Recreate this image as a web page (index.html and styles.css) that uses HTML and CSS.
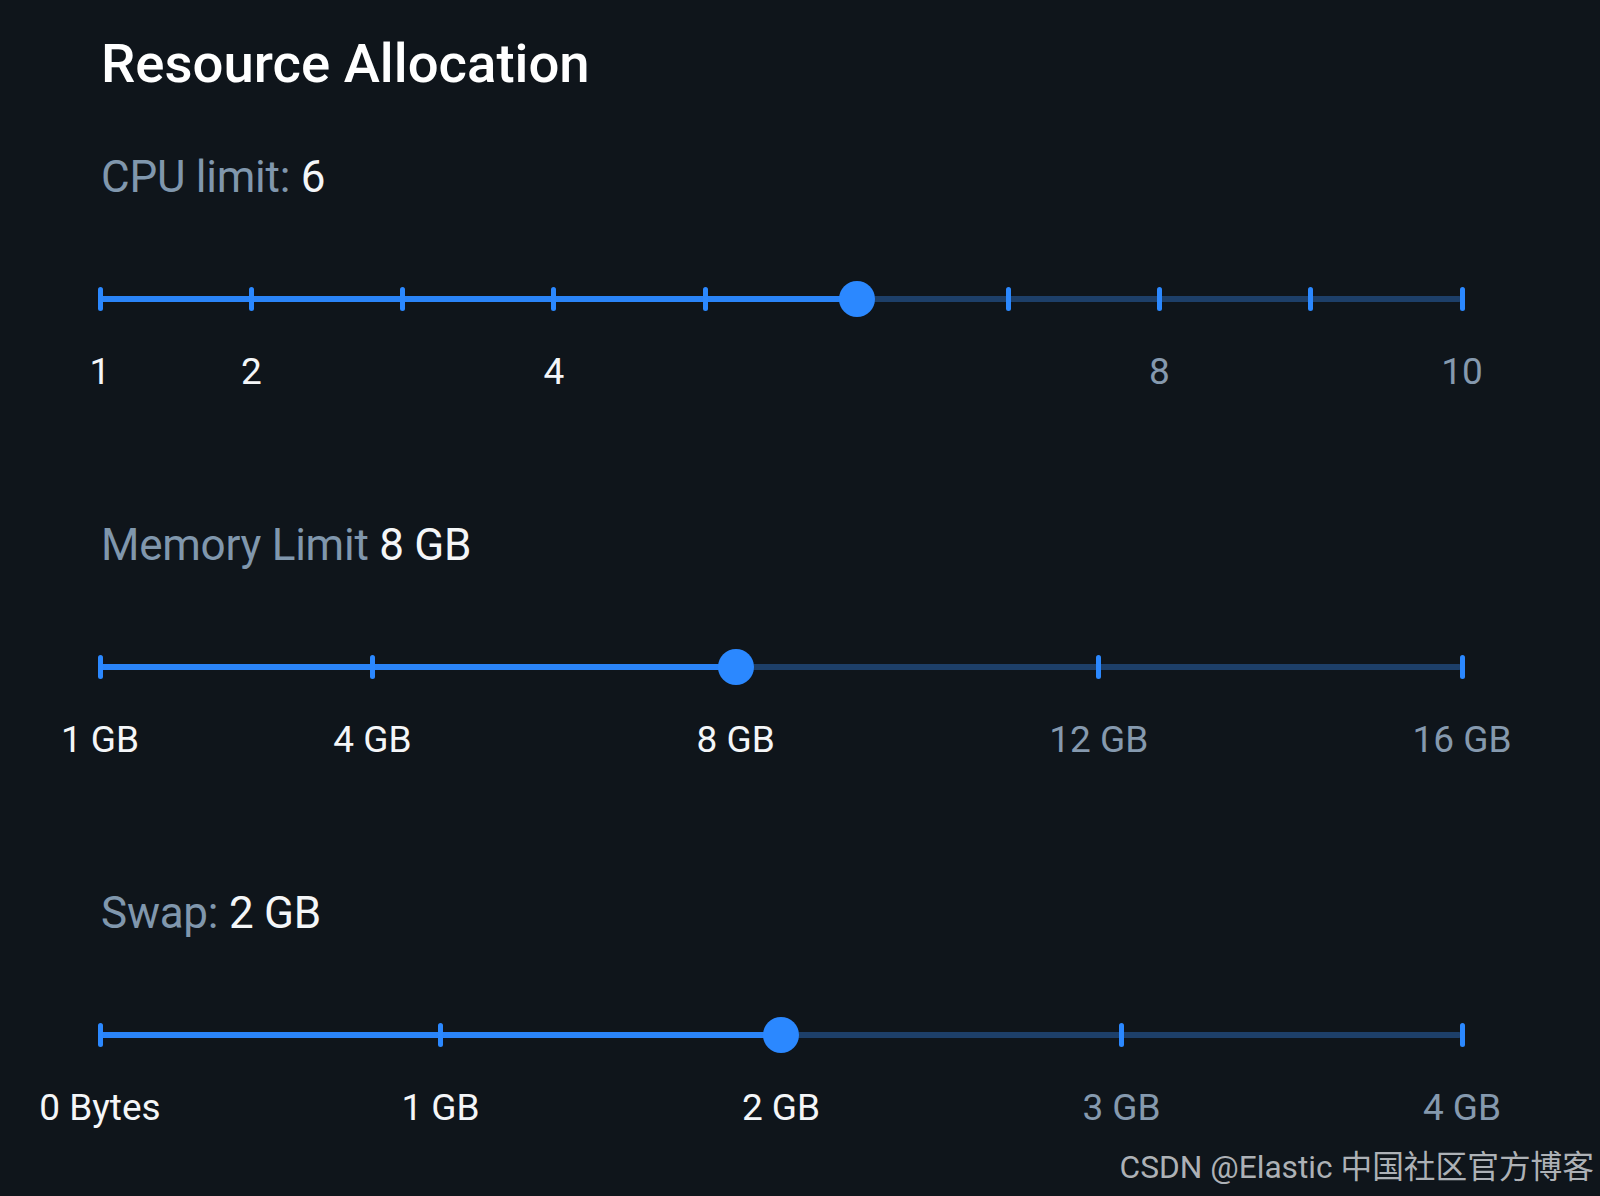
FILE: index.html
```html
<!DOCTYPE html>
<html lang="en">
<head>
<meta charset="utf-8">
<title>Resource Allocation</title>
<link rel="stylesheet" href="styles.css">
</head>
<body>
<main class="panel">
  <h1 class="title">Resource Allocation</h1>

  <section class="setting">
    <div class="setting-label">CPU limit: <span class="value">6</span></div>
    <div class="slider">
      <div class="rail"><div class="fill" style="width:55.556%"></div></div>
      <span class="tick" style="left:0%"></span>
      <span class="tick" style="left:11.111%"></span>
      <span class="tick" style="left:22.222%"></span>
      <span class="tick" style="left:33.333%"></span>
      <span class="tick" style="left:44.444%"></span>
      <span class="tick" style="left:66.667%"></span>
      <span class="tick" style="left:77.778%"></span>
      <span class="tick" style="left:88.889%"></span>
      <span class="tick" style="left:100%"></span>
      <span class="thumb" style="left:55.556%"></span>
    </div>
    <div class="marks">
      <span class="mark on" style="left:0%">1</span>
      <span class="mark on" style="left:11.111%">2</span>
      <span class="mark on" style="left:33.333%">4</span>
      <span class="mark" style="left:77.778%">8</span>
      <span class="mark" style="left:100%">10</span>
    </div>
  </section>

  <section class="setting">
    <div class="setting-label">Memory Limit <span class="value">8 GB</span></div>
    <div class="slider">
      <div class="rail"><div class="fill" style="width:46.667%"></div></div>
      <span class="tick" style="left:0%"></span>
      <span class="tick" style="left:20%"></span>
      <span class="tick" style="left:73.333%"></span>
      <span class="tick" style="left:100%"></span>
      <span class="thumb" style="left:46.667%"></span>
    </div>
    <div class="marks">
      <span class="mark on" style="left:0%">1 GB</span>
      <span class="mark on" style="left:20%">4 GB</span>
      <span class="mark on" style="left:46.667%">8 GB</span>
      <span class="mark" style="left:73.333%">12 GB</span>
      <span class="mark" style="left:100%">16 GB</span>
    </div>
  </section>

  <section class="setting">
    <div class="setting-label">Swap: <span class="value">2 GB</span></div>
    <div class="slider">
      <div class="rail"><div class="fill" style="width:50%"></div></div>
      <span class="tick" style="left:0%"></span>
      <span class="tick" style="left:25%"></span>
      <span class="tick" style="left:75%"></span>
      <span class="tick" style="left:100%"></span>
      <span class="thumb" style="left:50%"></span>
    </div>
    <div class="marks">
      <span class="mark on" style="left:0%">0 Bytes</span>
      <span class="mark on" style="left:25%">1 GB</span>
      <span class="mark on" style="left:50%">2 GB</span>
      <span class="mark" style="left:75%">3 GB</span>
      <span class="mark" style="left:100%">4 GB</span>
    </div>
  </section>
</main>
<div class="watermark">CSDN @Elastic 中国社区官方博客</div>
</body>
</html>
```

FILE: styles.css
```css
html, body {
  margin: 0;
  padding: 0;
}

body {
  width: 1600px;
  height: 1196px;
  background: #0f151b;
  font-family: Roboto, "Noto Sans", "Liberation Sans", sans-serif;
  color: #f4f6f8;
  position: relative;
  overflow: hidden;
}

.panel {
  padding: 31px 0 0 100px;
  width: 1362px;
}

.title {
  margin: 0;
  font-size: 54.5px;
  line-height: 64px;
  font-weight: 500;
  color: #ffffff;
  padding-left: 1px;
}

.setting {
  margin-top: 56px;
}

.setting + .setting {
  margin-top: 125px;
}

.setting-label {
  font-size: 44px;
  line-height: 52px;
  letter-spacing: -0.25px;
  color: #8097ad;
  padding-left: 1px;
}

.value {
  color: #f4f6f8;
}

.slider {
  position: relative;
  height: 40px;
  margin-top: 76px;
  display: flex;
  align-items: center;
}

.rail {
  flex: 1;
  height: 6px;
  border-radius: 3px;
  background: #1d3f69;
  display: flex;
}

.fill {
  height: 100%;
  border-radius: 3px;
  background: #2a84f8;
}

.tick {
  position: absolute;
  top: 8px;
  width: 5px;
  height: 24px;
  margin-left: -2.5px;
  border-radius: 3px;
  background: #2b88ff;
}

.thumb {
  position: absolute;
  top: 2px;
  width: 36px;
  height: 36px;
  margin-left: -18px;
  border-radius: 50%;
  background: #2b88ff;
}

.marks {
  position: relative;
  height: 44px;
  margin-top: 31px;
}

.mark {
  position: absolute;
  top: 0;
  transform: translateX(-50%);
  font-size: 37px;
  line-height: 44px;
  white-space: nowrap;
  color: #8599ae;
}

.mark.on {
  color: #f4f6f8;
}

.watermark {
  position: absolute;
  right: 6px;
  bottom: 8px;
  font-family: Roboto, "Noto Sans CJK SC", sans-serif;
  font-size: 31.7px;
  line-height: 40px;
  color: rgba(210, 214, 218, 0.82);
  white-space: nowrap;
}
```
